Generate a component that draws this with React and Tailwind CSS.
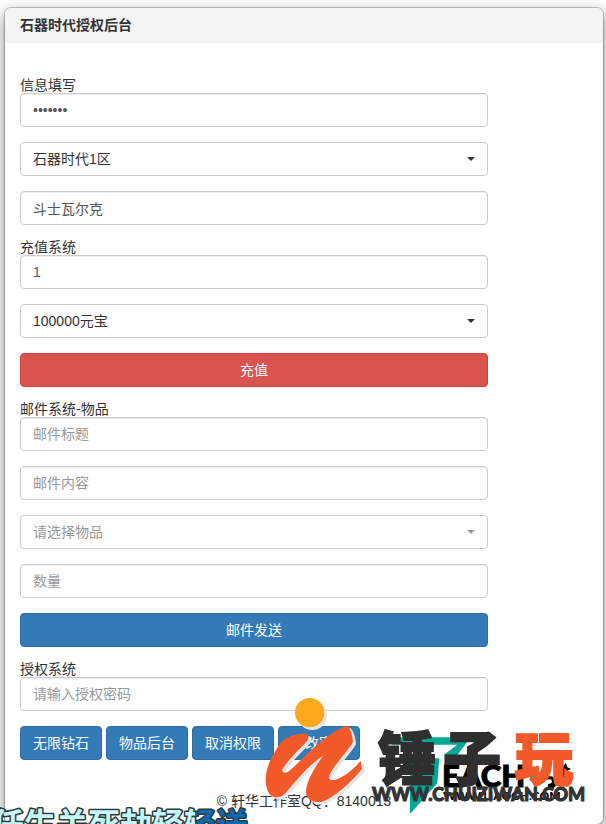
import React from "react";

const fieldBase =
  "block h-[34px] w-full rounded border border-[#ccc] bg-white px-3 text-[14px] outline-none";

function Field({ label, ...props }) {
  return (
    <input
      aria-label={label}
      className={`${fieldBase} text-[#555] shadow-[inset_0_1px_1px_rgba(0,0,0,0.075)] placeholder:text-[#999]`}
      {...props}
    />
  );
}

function Picker({ label, option, muted }) {
  return (
    <div className={`relative ${muted ? "text-[#999]" : "text-[#333]"}`}>
      <select aria-label={label} className={`${fieldBase} appearance-none`}>
        <option>{option}</option>
      </select>
      <svg
        viewBox="0 0 8 4"
        className="pointer-events-none absolute top-[15px] right-[13px] h-1 w-2"
        fill="currentColor"
      >
        <path d="M0 0H8L4 4Z" />
      </svg>
    </div>
  );
}

function Group({ title, children }) {
  return (
    <fieldset className="m-0 flex flex-col gap-[15px]">
      <div>
        <legend className="block h-[15px] text-[14px] leading-[15px]">{title}</legend>
        {children[0]}
      </div>
      {children.slice(1)}
    </fieldset>
  );
}

const blue = "border-[#2e6da4] bg-[#337ab7]";
const red = "border-[#d43f3a] bg-[#d9534f]";

function WideButton({ tone, children }) {
  return (
    <button
      type="button"
      className={`h-[34px] w-full rounded border text-[14px] text-white ${tone}`}
    >
      {children}
    </button>
  );
}

const swoosh =
  "M60 185C80 145 105 131 150 131C163 132 165 142 152 158C125 185 95 215 82 238C80 248 88 250 98 246C112 238 150 196 185 165C215 140 240 120 275 107C287 110 293 140 294 155C285 175 255 205 235 235C217 262 217 272 240 270C265 262 295 240 317 212L321 237C285 280 235 325 200 335C170 341 150 325 153 300C157 268 185 222 205 197C165 222 125 268 93 308C72 330 45 325 37 300C25 265 35 225 60 185Z";

function Watermark() {
  return (
    <svg
      viewBox="260 690 340 134"
      className="pointer-events-none absolute bottom-0 left-[260px] h-[134px] w-[340px]"
      aria-hidden="true"
    >
      <g transform="translate(370 720) scale(0.3333)" fill="#00a896">
        <path d="M85 52H302L255 115L222 104L262 74H65Z" />
        <path d="M120 115H208L202 190L120 282Z" />
        <path d="M480 160h18v16h-18z" />
      </g>
      <g fill="#000" fontFamily="Lato, sans-serif" fontWeight="900">
        <text x="442" y="787" fontSize="31" stroke="#000" strokeWidth="1">EACH</text>
        <text x="443" y="800" fontSize="12">WWW.LIAOGH.COM</text>
        <path d="M545 777q10-3 11 5t-8 6v-4q4 0 4-3t-7-1zM562 767l4-4 1 4 4 2-4 2v5l-1 6-3 2-3-8z" />
      </g>
      <g
        fontFamily="'Noto Sans CJK SC', sans-serif"
        fontWeight="900"
        fontSize="58"
        strokeWidth="2"
      >
        <text x="378" y="780" fill="#2f2f2f" stroke="#2f2f2f">锤</text>
        <text x="443" y="780" fill="#2f2f2f" stroke="#2f2f2f">子</text>
        <text x="515" y="780" fill="#f25a29" stroke="#f25a29">玩</text>
      </g>
      <text
        x="372"
        y="801"
        fill="#333"
        stroke="#333"
        strokeWidth="1"
        fontFamily="Lato, sans-serif"
        fontWeight="900"
        fontSize="18"
      >
        WWW.CHUIZIWAN.COM
      </text>
      <g transform="translate(255 690) scale(0.3333)">
        <g fill="#e6e6e6">
          <circle cx="172" cy="76" r="44" />
          <path d={swoosh} transform="translate(9 7)" />
        </g>
        <circle cx="164" cy="68" r="44" fill="#faa91a" />
        <path d={swoosh} fill="#f25a29" />
      </g>
    </svg>
  );
}

function Lyrics() {
  return (
    <svg
      viewBox="0 800 260 24"
      className="pointer-events-none absolute bottom-0 left-0 h-6 w-[260px]"
      aria-hidden="true"
    >
      <defs>
        <linearGradient id="sung" gradientUnits="userSpaceOnUse" x1="0" y1="0" x2="260" y2="0">
          <stop offset="0.75" stopColor="#c4fbff" />
          <stop offset="0.75" stopColor="#0b69ad" />
        </linearGradient>
      </defs>
      <text
        x="-8"
        y="836"
        fontSize="32"
        fontWeight="700"
        fontFamily="'Noto Sans CJK SC', sans-serif"
        fill="url(#sung)"
        stroke="#30383c"
        strokeWidth="3"
        strokeLinejoin="round"
        paintOrder="stroke"
      >
        任生关死劫轻轻送
      </text>
    </svg>
  );
}

export default function App() {
  return (
    <div className="relative flex min-h-screen flex-col overflow-hidden bg-white pt-2 pr-[3px] pl-[5px] font-['Liberation_Sans','Noto_Sans_CJK_SC',sans-serif] text-[14px] leading-5 text-[#333]">
      <main className="flex flex-1 flex-col rounded-md bg-white shadow-[0_0_0_1px_rgba(0,0,0,0.2),0_5px_15px_rgba(0,0,0,0.5)]">
        <header className="rounded-t-md bg-[#f4f4f4] px-[15px] py-2">
          <h1 className="h-[19px] text-[14px] leading-[19px] font-bold">石器时代授权后台</h1>
        </header>
        <form className="flex flex-col gap-[15px] pt-[35px] pr-[115px] pl-[15px]">
          <Group title="信息填写">
            <Field key="a" label="密码" type="password" defaultValue="1234567" />
            <Picker key="b" label="选择大区" option="石器时代1区" />
            <Field key="c" label="角色名" type="text" defaultValue="斗士瓦尔克" />
          </Group>
          <Group title="充值系统">
            <Field key="a" label="充值数量" type="text" defaultValue="1" />
            <Picker key="b" label="充值类型" option="100000元宝" />
            <WideButton key="c" tone={red}>充值</WideButton>
          </Group>
          <Group title="邮件系统-物品">
            <Field key="a" label="邮件标题" type="text" placeholder="邮件标题" />
            <Field key="b" label="邮件内容" type="text" placeholder="邮件内容" />
            <Picker key="c" label="物品" option="请选择物品" muted />
            <Field key="d" label="数量" type="text" placeholder="数量" />
            <WideButton key="e" tone={blue}>邮件发送</WideButton>
          </Group>
          <Group title="授权系统">
            <Field key="a" label="授权密码" type="password" placeholder="请输入授权密码" />
            <div key="b" className="flex gap-1">
              {["无限钻石", "物品后台", "取消权限", "修改密码"].map((name) => (
                <button
                  key={name}
                  type="button"
                  className={`h-[34px] rounded border px-3 text-[14px] whitespace-nowrap text-white ${blue}`}
                >
                  {name}
                </button>
              ))}
            </div>
          </Group>
        </form>
        <footer className="mt-[31px] text-center">© 轩华工作室QQ：8140013</footer>
      </main>
      <Watermark />
      <Lyrics />
    </div>
  );
}
